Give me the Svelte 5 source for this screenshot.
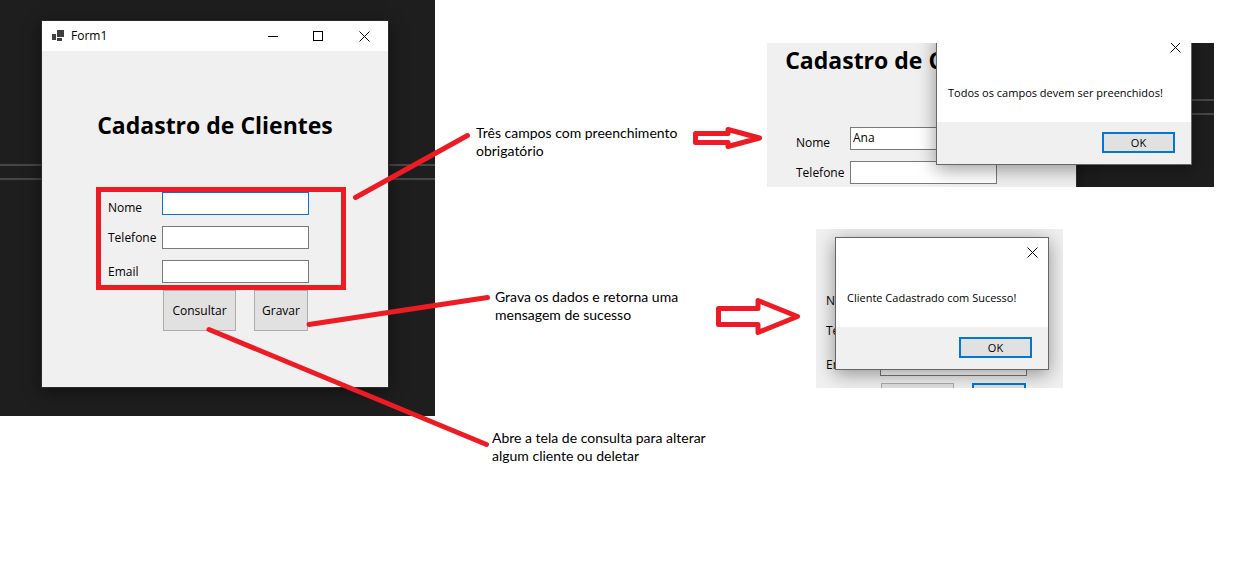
<script>
  const allFields = ['Nome', 'Telefone', 'Email'];
</script>

{#snippet closeIcon()}
  <svg width="11" height="11" viewBox="0 0 11 11" aria-hidden="true">
    <path d="M0.5 0.5 L10.5 10.5 M10.5 0.5 L0.5 10.5" fill="none" stroke="#000" stroke-width="1" />
  </svg>
{/snippet}

{#snippet titlebar()}
  <header class="titlebar">
    <svg width="12" height="12" viewBox="0 0 12 12" aria-hidden="true" fill="#404040">
      <path d="M5 0h7v7H5z M0 4h4v6H0z M5 8h5v3H5z" />
    </svg>
    <span class="caption">Form1</span>
    <button class="chrome" aria-label="Minimizar">
      <svg width="11" height="11" viewBox="0 0 11 11" aria-hidden="true"><path d="M1 5h10v1H1z" /></svg>
    </button>
    <button class="chrome" aria-label="Maximizar">
      <svg width="11" height="11" viewBox="0 0 11 11" aria-hidden="true">
        <rect x="0.5" y="0.5" width="9" height="9" fill="none" stroke="#000" />
      </svg>
    </button>
    <button class="chrome" aria-label="Fechar">{@render closeIcon()}</button>
  </header>
{/snippet}

{#snippet heading()}
  <h1>Cadastro de Clientes</h1>
{/snippet}

{#snippet fieldRows(id, names, values, activeField)}
  {#each names as field, i}
    <div class="row">
      <label for="{id}-{field}">{field}</label>
      <input id="{id}-{field}" type="text" class:active={activeField === i} value={values[i] ?? ''} />
    </div>
  {/each}
{/snippet}

{#snippet dialog(message)}
  <div class="message-head">
    <button class="chrome slim" aria-label="Fechar">{@render closeIcon()}</button>
  </div>
  <p class="message">{message}</p>
  <footer><button class="ok">OK</button></footer>
{/snippet}

<main>
  <section class="desktop main-desktop">
    <div class="window main-window">
      {@render titlebar()}
      {@render heading()}
      <form onsubmit={(e) => e.preventDefault()}>
        {@render fieldRows('cadastro', allFields, [], 0)}
        <div class="actions">
          <button type="button" class="action">Consultar</button>
          <button type="submit" class="action">Gravar</button>
        </div>
      </form>
    </div>
  </section>

  <section class="desktop required-desktop">
    <div class="window required-window">
      {@render heading()}
      <form onsubmit={(e) => e.preventDefault()}>
        {@render fieldRows('validacao', allFields.slice(0, 2), ['Ana'], -1)}
      </form>
    </div>
    <div class="dialog required-dialog" role="dialog" aria-label="Aviso">
      {@render dialog('Todos os campos devem ser preenchidos!')}
    </div>
  </section>

  <section class="desktop success-desktop">
    <div class="window success-window">
      <form onsubmit={(e) => e.preventDefault()}>
        {@render fieldRows('sucesso', allFields, [], -1)}
        <div class="actions">
          <button type="button" class="action" aria-label="Consultar"></button>
          <button type="submit" class="action default" aria-label="Gravar"></button>
        </div>
      </form>
    </div>
    <div class="dialog success-dialog" role="dialog" aria-label="Sucesso">
      {@render dialog('Cliente Cadastrado com Sucesso!')}
    </div>
  </section>

  <p class="note note-required">Três campos com preenchimento obrigatório</p>
  <p class="note note-save">Grava os dados e retorna uma mensagem de sucesso</p>
  <p class="note note-query">Abre a tela de consulta para alterar algum cliente ou deletar</p>

  <svg class="marks" width="810" height="460" viewBox="0 0 810 460" aria-hidden="true">
    <rect x="98.5" y="189.5" width="245" height="98" stroke-linejoin="miter" />
    <path d="M355.5 197.5 L467.5 135.5" />
    <path d="M309 324.5 L487.5 297.5" />
    <path d="M209 329.5 L486.5 444.5" />
    <path d="M695.5 133.5 H728 V129.5 L759.5 138 L728 146.5 V142.5 H695.5 Z" />
    <path d="M718.5 308.5 H758 V300.5 L797.5 316.5 L758 332.5 V324.5 H718.5 Z" />
  </svg>
</main>

<style>
  :global(body) {
    margin: 0;
    background: #fff;
  }

  main {
    position: relative;
    min-height: 100vh;
    overflow: hidden;
    color: #000;
    font: 12px/16px 'Open Sans', 'Noto Sans', sans-serif;
  }

  h1,
  p {
    margin: 0;
  }

  button,
  input {
    box-sizing: border-box;
    margin: 0;
    font: inherit;
    color: inherit;
    border-radius: 0;
    outline: none;
  }

  /* Desktop captures placed on the board */
  .desktop {
    position: absolute;
    overflow: hidden;
    background: #1e1e1e;
  }

  .desktop::before {
    content: '';
    position: absolute;
    left: 0;
    right: 0;
    top: 164px;
    height: 12px;
    border: solid #464646;
    border-width: 2px 0;
  }

  .main-desktop {
    left: 0;
    top: 0;
    width: 435px;
    height: 416px;
  }

  .required-desktop {
    left: 767px;
    top: 43px;
    width: 447px;
    height: 144px;
  }

  .required-desktop::before {
    top: 56px;
  }

  .success-desktop {
    left: 816px;
    top: 229px;
    width: 247px;
    height: 159px;
  }

  /* Form window */
  .window {
    position: absolute;
    width: 346px;
    padding-bottom: 56px;
    background: #f0f0f0;
    box-shadow: 0 0 0 1px #2b2b2b, 0 4px 16px rgba(0, 0, 0, 0.5);
  }

  .main-window {
    left: 42px;
    top: 21px;
  }

  .required-window {
    left: -37px;
    top: -57px;
  }

  .success-window {
    left: -56px;
    top: 0;
    padding-top: 5px;
  }

  .titlebar {
    display: flex;
    align-items: center;
    height: 30px;
    padding-left: 10px;
    background: #fff;
  }

  .caption {
    flex: 1;
    margin-left: 7px;
  }

  .chrome {
    display: flex;
    align-items: center;
    justify-content: center;
    width: 46px;
    height: 29px;
    padding: 0 1px 0 0;
    border: 0;
    background: none;
  }

  .chrome.slim {
    width: 31px;
    height: 28px;
  }

  h1 {
    padding-top: 58px;
    font-size: 23px;
    line-height: 32px;
    font-weight: 700;
    text-align: center;
    white-space: nowrap;
  }

  form {
    display: flex;
    flex-direction: column;
    gap: 11px;
    padding: 51px 79px 0 66px;
  }

  .row {
    display: grid;
    grid-template-columns: 54px 147px;
    align-items: center;
  }

  .row:first-child {
    align-items: end;
  }

  .row label {
    line-height: 15px;
  }

  .row input {
    height: 23px;
    padding: 0 2px 2px;
    border: 1px solid #7a7a7a;
    background: #fff;
  }

  .row input.active {
    border-color: #0078d7;
  }

  .actions {
    display: grid;
    grid-template-columns: 73px 54px;
    justify-content: end;
    gap: 18px;
    margin-top: -4px;
    padding-right: 1px;
  }

  .action {
    height: 41px;
    padding: 0;
    border: 1px solid #adadad;
    background: #e1e1e1;
  }

  .action.default {
    border: 2px solid #0078d7;
  }

  /* Message dialogs */
  .dialog {
    position: absolute;
    box-sizing: border-box;
    border: 1px solid #666;
    background: #fff;
    box-shadow: 0 4px 18px rgba(0, 0, 0, 0.4);
  }

  .required-dialog {
    left: 169px;
    top: -11px;
    width: 256px;
  }

  .success-dialog {
    left: 19px;
    top: 8px;
    width: 214px;
  }

  .message-head {
    display: flex;
    justify-content: flex-end;
    height: 30px;
  }

  .message {
    padding: 22px 11px 21px;
    font-size: 11px;
    white-space: nowrap;
  }

  footer {
    display: flex;
    justify-content: flex-end;
    padding: 10px 16px 11px;
    background: #f0f0f0;
  }

  .ok {
    width: 73px;
    height: 21px;
    padding: 0;
    border: 2px solid #0078d7;
    background: #e1e1e1;
    font-size: 11px;
    line-height: 16px;
  }

  /* Explanatory notes */
  .note {
    position: absolute;
    width: 224px;
    font: 14px/18px Lato, sans-serif;
  }

  .note-required {
    left: 476px;
    top: 124px;
  }

  .note-save {
    left: 495px;
    top: 288px;
  }

  .note-query {
    left: 492px;
    top: 429px;
  }

  .marks {
    position: absolute;
    left: 0;
    top: 0;
    pointer-events: none;
    fill: none;
    stroke: #ed1c24;
    stroke-width: 5px;
    stroke-linecap: round;
    stroke-linejoin: round;
  }
</style>
